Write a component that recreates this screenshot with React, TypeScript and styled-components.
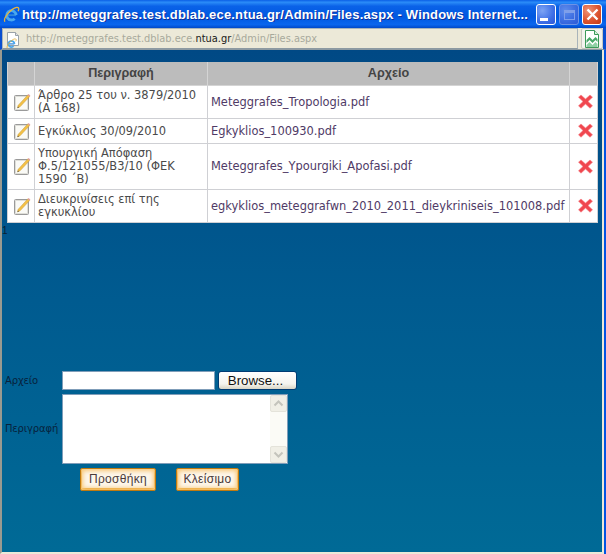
import React from 'react';
import styled, { createGlobalStyle } from 'styled-components';

const GlobalStyle = createGlobalStyle`
  html, body {
    margin: 0;
    padding: 0;
    background: #0054e3;
  }
`;

const rows = [
  { text: 'Άρθρο 25 του ν. 3879/2010 (Α 168)', file: 'Meteggrafes_Tropologia.pdf', height: 33 },
  { text: 'Εγκύκλιος 30/09/2010', file: 'Egkyklios_100930.pdf', height: 25 },
  { text: 'Υπουργική Απόφαση Φ.5/121055/Β3/10 (ΦΕΚ 1590 ΄Β)', file: 'Meteggrafes_Ypourgiki_Apofasi.pdf', height: 46 },
  { text: 'Διευκρινίσεις επί της εγκυκλίου', file: 'egkyklios_meteggrafwn_2010_2011_dieykriniseis_101008.pdf', height: 33 },
];

function IeLogo({ size }: { size: number }) {
  return (
    <svg width={size} height={size} viewBox="0 0 16 16">
      <path d="M4 8.6h8.2" stroke="#2f86dc" strokeWidth="1.8" />
      <path d="M12.3 8.6A4.4 4.4 0 1 0 11 11.9" fill="none" stroke="#4aa8ee" strokeWidth="2.6" />
      <path d="M1.8 14.8C-.2 11.5 7.5 2.4 12.8 1.3c2-.4 2.6 1.4 1.4 3.6" fill="none" stroke="#e8b43c" strokeWidth="1.2" />
    </svg>
  );
}

function PageIcon() {
  return (
    <svg width="16" height="16" viewBox="0 0 16 16">
      <path d="M2.5 1.5h8l3 3v10h-11z" fill="#fff" stroke="#9aa2a8" />
      <path d="M10.5 1.5v3h3" fill="#e4e4e4" stroke="#9aa2a8" />
    </svg>
  );
}

function ExcelPage() {
  return (
    <svg width="18" height="20" viewBox="0 0 18 20">
      <path d="M2.5 1.5h9l4 4v13h-13z" fill="#fff" stroke="#3c9a5a" />
      <path d="M11.5 1.5v4h4" fill="#d8f0dc" stroke="#3c9a5a" />
      <path d="M3.5 11l3-3 3 3 3-3 2 2v3l-2-2-3 3-3-3-3 3z" fill="#48a868" />
      <path d="M3.5 16l3-3 3 3 3-3 2 2v3h-11z" fill="#8fd0a4" />
    </svg>
  );
}

function EditIcon() {
  return (
    <svg width="17" height="18" viewBox="0 0 17 18">
      <rect x="0.5" y="2.5" width="14" height="15" rx="1" fill="#f4f4f0" stroke="#9a9a9a" />
      <rect x="1.5" y="3.5" width="12" height="13" fill="#fafaf6" stroke="#dedeD8" />
      <path d="M3.5 15l.8-2.8L13.8 1.9l1.8 1.7L6 13.8z" fill="#f4c044" stroke="#c4962c" strokeWidth="0.5" />
      <path d="M13.6 2.1l1.9 1.7.9-1-1.7-1.7z" fill="#e0a0a0" />
      <path d="M3.5 15l.4-1.6 1.2 1z" fill="#555" />
    </svg>
  );
}

function DeleteIcon() {
  return (
    <svg width="15" height="15" viewBox="0 0 15 15">
      <path
        d="M3 1l4.5 4L12 1l2.5 2.2L10 7.5l4.5 4.3L12 14.2 7.5 10 3 14.2.5 11.8 5 7.5.5 3.2z"
        fill="#f0474f"
        stroke="#f58086"
        strokeWidth="0.6"
      />
    </svg>
  );
}

export default function App() {
  return (
    <Window>
      <GlobalStyle />
      <TitleBar>
        <IeLogo size={17} />
        <TitleText>http://meteggrafes.test.dblab.ece.ntua.gr/Admin/Files.aspx - Windows Internet...</TitleText>
        <WindowButtons>
          <WinButton $kind="min"><MinGlyph /></WinButton>
          <WinButton $kind="max" $faded><MaxGlyph /></WinButton>
          <WinButton $kind="close">
            <svg width="13" height="13" viewBox="0 0 13 13">
              <path d="M1.5 1.5l10 10M11.5 1.5l-10 10" stroke="#fff" strokeWidth="2.4" />
            </svg>
          </WinButton>
        </WindowButtons>
      </TitleBar>

      <AddressRow>
        <AddressBox>
          <PageBadge>
            <PageIcon />
            <BadgeLogo><IeLogo size={11} /></BadgeLogo>
          </PageBadge>
          <Url>
            http://meteggrafes.test.dblab.ece.<Domain>ntua.gr</Domain>/Admin/Files.aspx
          </Url>
        </AddressBox>
        <StatusButton><ExcelPage /></StatusButton>
      </AddressRow>

      <Content>
        <FilesTable>
          <thead>
            <tr>
              <HeadCell $width={27} />
              <HeadCell $width={173}>Περιγραφή</HeadCell>
              <HeadCell $width={362}>Αρχείο</HeadCell>
              <HeadCell $width={28} />
            </tr>
          </thead>
          <tbody>
            {rows.map((row) => (
              <tr key={row.file} style={{ height: row.height }}>
                <IconCell><EditIcon /></IconCell>
                <TextCell>{row.text}</TextCell>
                <FileCell>{row.file}</FileCell>
                <IconCell><DeleteIcon /></IconCell>
              </tr>
            ))}
          </tbody>
        </FilesTable>

        <Pager>1</Pager>

        <UploadForm>
          <FormLabel>Αρχείο</FormLabel>
          <FileRow>
            <FileInput />
            <BrowseButton>Browse...</BrowseButton>
          </FileRow>
          <FormLabel>Περιγραφή</FormLabel>
          <Description>
            <ScrollTrack>
              <ScrollArrow>
                <svg width="11" height="7" viewBox="0 0 11 7">
                  <path d="M1.5 5.5l4-4 4 4" fill="none" stroke="#c4c4bc" strokeWidth="2" />
                </svg>
              </ScrollArrow>
              <ScrollArrow>
                <svg width="11" height="7" viewBox="0 0 11 7">
                  <path d="M1.5 1.5l4 4 4-4" fill="none" stroke="#c4c4bc" strokeWidth="2" />
                </svg>
              </ScrollArrow>
            </ScrollTrack>
          </Description>
        </UploadForm>

        <Actions>
          <ActionButton $width={76}>Προσθήκη</ActionButton>
          <ActionButton $width={63}>Κλείσιμο</ActionButton>
        </Actions>
      </Content>
    </Window>
  );
}

const Window = styled.div`
  width: 606px;
  height: 554px;
  display: flex;
  flex-direction: column;
  overflow: hidden;
  background: #0054e3;
`;

const TitleBar = styled.div`
  height: 28px;
  flex: none;
  box-sizing: border-box;
  display: flex;
  align-items: center;
  padding: 1px 4px 0 3px;
  background: linear-gradient(180deg, #0a5fe6 0%, #2b8cf8 8%, #0a62e8 22%, #0058e0 60%, #0a66ee 88%, #0048c8 100%);
`;

const TitleText = styled.div`
  flex: 1;
  margin-left: 2px;
  font: bold 13px 'Liberation Sans', Arial, sans-serif;
  letter-spacing: 0.17px;
  color: #fff;
  text-shadow: 1px 1px 0 #0f2f9a;
  white-space: nowrap;
  overflow: hidden;
`;

const WindowButtons = styled.div`
  display: flex;
  gap: 3px;
`;

const WinButton = styled.div<{ $kind: 'min' | 'max' | 'close'; $faded?: boolean }>`
  width: 20px;
  height: 21px;
  box-sizing: border-box;
  border: 1px solid ${(p) => (p.$faded ? '#6d93e6' : '#fff')};
  border-radius: 3px;
  display: flex;
  align-items: center;
  justify-content: center;
  background: ${(p) =>
    p.$kind === 'close'
      ? 'radial-gradient(circle at 30% 30%, #ef9478, #dc5430 55%, #c23a16)'
      : p.$faded
        ? 'radial-gradient(circle at 30% 30%, #5e8cec, #3a6be0 60%, #2c5ad6)'
        : 'radial-gradient(circle at 30% 30%, #7da4f4, #3e6fe6 60%, #2a57d8)'};
`;

const MinGlyph = styled.span`
  width: 8px;
  height: 3px;
  background: #fff;
  margin: 9px 5px 0 0;
`;

const MaxGlyph = styled.span`
  width: 11px;
  height: 10px;
  box-sizing: border-box;
  border: 1px solid #7f9fea;
  border-top-width: 3px;
`;

const AddressRow = styled.div`
  height: 22px;
  flex: none;
  box-sizing: border-box;
  display: flex;
  background: #ece9d8;
  border-left: 2px solid #0a4fd0;
  border-right: 3px solid #0a4fd0;
  border-bottom: 1px solid #8d9aa2;
`;

const AddressBox = styled.div`
  flex: 1;
  display: flex;
  align-items: center;
  box-sizing: border-box;
  border: 1px solid #a9b4ba;
  border-bottom-color: #8d9aa2;
  padding-left: 2px;
`;

const PageBadge = styled.div`
  position: relative;
  width: 16px;
  height: 16px;
  flex: none;
`;

const BadgeLogo = styled.div`
  position: absolute;
  left: 1px;
  top: 4px;
`;

const Url = styled.div`
  margin-left: 5px;
  font: 9.85px 'DejaVu Sans', Verdana, sans-serif;
  color: #a8a99c;
  white-space: nowrap;
`;

const Domain = styled.span`
  color: #1a1a1a;
`;

const StatusButton = styled.div`
  width: 22px;
  flex: none;
  margin-left: 3px;
  box-sizing: border-box;
  display: flex;
  align-items: center;
  justify-content: center;
  background: #f3f3ee;
  border: 1px solid #c8c8c0;
  border-radius: 2px;
`;

const Content = styled.div`
  flex: 1;
  box-sizing: border-box;
  margin-right: 2px;
  border-left: 2px solid #9a9a90;
  border-right: 2px solid #ece9d8;
  border-bottom: 2px solid #ece9d8;
  padding: 12px 0 0 0;
  background: linear-gradient(180deg, #004985 0%, #005b90 50%, #006a96 100%);
`;

const FilesTable = styled.table`
  width: 590px;
  margin-left: 5px;
  border-collapse: collapse;
  table-layout: fixed;
  background: #fff;
  font: 11.45px/13px 'DejaVu Sans', Verdana, sans-serif;
  color: #4a4a4a;
`;

const HeadCell = styled.th<{ $width: number }>`
  width: ${(p) => p.$width}px;
  box-sizing: border-box;
  height: 23px;
  padding: 0;
  background: #bcbcbc;
  border: 1px solid #d4d4d4;
  border-top: 0;
  font: bold 12.6px 'Liberation Sans', Arial, sans-serif;
  color: #444;
  text-align: center;
`;

const IconCell = styled.td`
  padding: 0 0 0 3px;
  border: 1px solid #cfd0d4;
  text-align: center;
  vertical-align: middle;
  line-height: 0;
`;

const TextCell = styled.td`
  padding: 1px 3px 0;
  border: 1px solid #cfd0d4;
`;

const FileCell = styled.td`
  padding: 1px 3px 0;
  border: 1px solid #cfd0d4;
  color: #4f3a66;
  white-space: nowrap;
`;

const Pager = styled.div`
  height: 13px;
  margin-top: 1px;
  font: 10px/13px 'Liberation Sans', Arial, sans-serif;
  color: #0a1f33;
`;

const UploadForm = styled.div`
  display: grid;
  grid-template-columns: 57px auto;
  row-gap: 4px;
  align-items: center;
  margin: 134px 0 0 3px;
`;

const FormLabel = styled.div`
  font: 10px 'DejaVu Sans', Tahoma, sans-serif;
  letter-spacing: -0.15px;
  color: #07223c;
  white-space: nowrap;
`;

const FileRow = styled.div`
  display: flex;
  gap: 3px;
`;

const FileInput = styled.div`
  width: 153px;
  height: 19px;
  box-sizing: border-box;
  background: #fff;
  border: 1px solid #7f9db9;
`;

const BrowseButton = styled.div`
  width: 79px;
  height: 19px;
  box-sizing: border-box;
  display: flex;
  align-items: center;
  justify-content: center;
  padding-right: 4px;
  border: 1px solid #003c74;
  border-radius: 3px;
  background: linear-gradient(180deg, #fff 0%, #f5f4ee 70%, #d8d4c4 100%);
  font: 13.3px 'Liberation Sans', Arial, sans-serif;
  color: #111;
`;

const Description = styled.div`
  width: 226px;
  height: 70px;
  box-sizing: border-box;
  display: flex;
  justify-content: flex-end;
  background: #fff;
  border: 1px solid #7f9db9;
`;

const ScrollTrack = styled.div`
  width: 17px;
  display: flex;
  flex-direction: column;
  justify-content: space-between;
  background: #fbfbf6;
`;

const ScrollArrow = styled.div`
  height: 17px;
  display: flex;
  align-items: center;
  justify-content: center;
  background: #f0efe6;
  border: 1px solid #e4e3da;
  box-sizing: border-box;
  border-radius: 2px;
`;

const Actions = styled.div`
  display: flex;
  gap: 20px;
  margin: 4px 0 0 78px;
`;

const ActionButton = styled.div<{ $width: number }>`
  width: ${(p) => p.$width}px;
  height: 23px;
  box-sizing: border-box;
  display: flex;
  align-items: center;
  justify-content: center;
  border: 1px solid #c07a10;
  border-radius: 2px;
  background: #fdf6ea;
  box-shadow: inset 0 0 4px 2px #f8c878, inset 0 -1px 0 1px #e59a1c;
  font: 12px 'Liberation Sans', Arial, sans-serif;
  letter-spacing: 0.3px;
  color: #4a3a3a;
`;
